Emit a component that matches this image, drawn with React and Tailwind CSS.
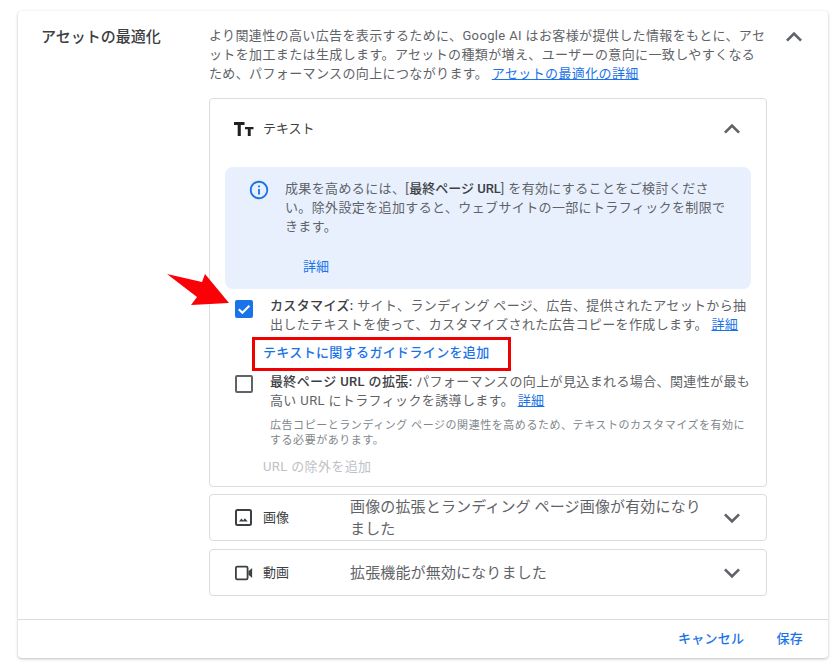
const FONT = "font-['Roboto','Noto_Sans_CJK_JP',sans-serif]";

function Chevron({ up, className }) {
  return (
    <svg viewBox="0 0 24 24" className={className} fill="currentColor">
      <path d={up ? 'M12 8l-6 6 1.41 1.41L12 10.83l4.59 4.58L18 14z' : 'M16.59 8.59L12 13.17 7.41 8.59 6 10l6 6 6-6z'} />
    </svg>
  );
}

function Checkbox({ checked }) {
  if (checked) {
    return (
      <svg viewBox="0 0 18 18" className="w-[18px] h-[18px]">
        <rect width="18" height="18" rx="2" fill="#1a73e8" />
        <path d="M3.8 9.2l3.6 3.6 7-7" fill="none" stroke="#fff" strokeWidth="2" />
      </svg>
    );
  }
  return <div className="w-[18px] h-[18px] rounded-[2px] border-2 border-[#5f6368]" />;
}

function CollapsedRow({ icon, label, children }) {
  return (
    <div className="flex items-center h-[47px] border border-[#dadce0] rounded-[4px] bg-white">
      <div className="w-[25px] shrink-0" />
      <div className="w-[18px] flex justify-center shrink-0">{icon}</div>
      <div className="w-[10px] shrink-0" />
      <div className="w-[87px] shrink-0 text-[13px] text-[#3c4043]">{label}</div>
      <div className="w-[356px] shrink-0 text-[15px] leading-[22px] tracking-[0.15px] text-[#5f6368] whitespace-nowrap">{children}</div>
      <div className="flex-1 flex justify-center pr-[8px]">
        <Chevron className="w-8 h-8 text-[#5f6368]" />
      </div>
    </div>
  );
}

export default function App() {
  return (
    <div className={`${FONT} w-[840px] h-[666px] bg-white overflow-hidden pt-[11px] pl-[18px]`}>
      <div className="w-[810px] h-[647px] bg-white rounded-[4px] shadow-[0_1px_3px_rgba(60,64,67,0.35)] flex flex-col">
        <div className="flex-1 flex pt-[15px]">
          <div className="w-[191px] pl-[23px] pt-[1px] text-[15px] leading-[20px] font-medium text-[#3c4043]">アセットの最適化</div>
          <div className="w-[558px]">
            <p className="text-[13px] leading-[19px] tracking-[0.37px] text-[#5f6368] whitespace-nowrap">
              より関連性の高い広告を表示するために、Google AI はお客様が提供した情報をもとに、アセ<br />
              ットを加工または生成します。アセットの種類が増え、ユーザーの意向に一致しやすくなる<br />
              ため、パフォーマンスの向上につながります。 <a className="text-[#1a73e8] underline">アセットの最適化の詳細</a>
            </p>
            <div className="mt-[15px] h-[389px] border border-[#dadce0] rounded-[4px] relative">
              <div className="h-[60px] flex items-center pl-[24px] pr-[18px]">
                <svg viewBox="0 0 20 14" className="w-[20px] h-[14px] text-[#202124]" fill="currentColor">
                  <path d="M0 0h10.5v3H6.8V14H3.7V3H0z" />
                  <path d="M11 5h8.5v2.3h-2.8V14h-2.9V7.3H11z" />
                </svg>
                <span className="ml-[9px] text-[13px] text-[#3c4043]">テキスト</span>
                <Chevron up className="w-8 h-8 ml-auto text-[#5f6368]" />
              </div>
              <div className="mx-[15px] h-[122px] mt-[8px] bg-[#e8f0fe] rounded-[8px] flex pt-[12px] pl-[23px]">
                <svg viewBox="0 0 24 24" className="w-[22px] h-[22px] text-[#1a73e8] shrink-0" fill="currentColor">
                  <path d="M11 7h2v2h-2zm0 4h2v6h-2zm1-9C6.48 2 2 6.48 2 12s4.48 10 10 10 10-4.48 10-10S17.52 2 12 2zm0 18c-4.41 0-8-3.59-8-8s3.59-8 8-8 8 3.59 8 8-3.59 8-8 8z" />
                </svg>
                <div className="ml-[15px]">
                  <p className="text-[13px] leading-[19px] tracking-[0.37px] text-[#5f6368] whitespace-nowrap">
                    成果を高めるには、[<b className="font-medium tracking-[0px] text-[#3c4043]">最終ページ URL</b>] を有効にすることをご検討くださ<br />
                    い。除外設定を追加すると、ウェブサイトの一部にトラフィックを制限で<br />
                    きます。
                  </p>
                  <a className="block mt-[22px] ml-[18px] text-[13px] leading-[18px] text-[#1a73e8]">詳細</a>
                </div>
              </div>
              <div className="flex mt-[7px] pl-[25px]">
                <div className="pt-[4px]"><Checkbox checked /></div>
                <p className="ml-[17px] text-[13px] leading-[19px] tracking-[0.37px] text-[#5f6368] whitespace-nowrap">
                  <b className="font-medium text-[#3c4043]">カスタマイズ:</b> サイト、ランディング ページ、広告、提供されたアセットから抽<br />
                  出したテキストを使って、カスタマイズされた広告コピーを作成します。 <a className="text-[#1a73e8] underline">詳細</a>
                </p>
              </div>
              <a className="block mt-[10px] ml-[53px] text-[13px] leading-[18px] tracking-[0.35px] font-medium text-[#1a73e8]">テキストに関するガイドラインを追加</a>
              <div className="flex mt-[10px] pl-[25px]">
                <div className="pt-[3px]"><Checkbox /></div>
                <p className="ml-[17px] text-[13px] leading-[19px] tracking-[0.37px] text-[#5f6368] whitespace-nowrap">
                  <b className="font-medium text-[#3c4043]">最終ページ URL の拡張:</b> パフォーマンスの向上が見込まれる場合、関連性が最も<br />
                  高い URL にトラフィックを誘導します。 <a className="text-[#1a73e8] underline">詳細</a>
                </p>
              </div>
              <p className="mt-[8px] ml-[60px] text-[11px] leading-[15px] tracking-[0.55px] text-[#80868b] whitespace-nowrap">
                広告コピーとランディング ページの関連性を高めるため、テキストのカスタマイズを有効に<br />
                する必要があります。
              </p>
              <div className="mt-[9px] ml-[53px] text-[13px] leading-[20px] tracking-[0.37px] text-[#bdc1c6]">URL の除外を追加</div>

              {/* annotations on top of the screenshot */}
              <div className="absolute left-[42px] top-[238px] w-[259px] h-[34px] border-[3px] border-[#f00000]" />
              <svg viewBox="0 0 66 36" className="absolute left-[-45px] top-[173px] w-[66px] h-[36px]">
                <path d="M2 2 L37 10 L40 2 L64 31 L26 33 L32 25 Z" fill="#fb0007" />
              </svg>
            </div>
            <div className="mt-[7px] flex flex-col gap-[8px]">
              <CollapsedRow
                label="画像"
                icon={
                  <svg viewBox="0 0 18 18" className="w-[18px] h-[18px] text-[#3c4043]" fill="none">
                    <rect x="1" y="1" width="15" height="15" rx="1.5" stroke="currentColor" strokeWidth="2" />
                    <path d="M4 12.5l2.4-3 1.8 2 1.6-2.2 3 3.2z" fill="currentColor" />
                  </svg>
                }
              >
                画像の拡張とランディング ページ画像が有効になり<br />ました
              </CollapsedRow>
              <CollapsedRow
                label="動画"
                icon={
                  <svg viewBox="0 0 20 16" className="w-[20px] h-[16px] text-[#3c4043]" fill="none">
                    <rect x="1" y="1" width="13" height="14" rx="1.5" stroke="currentColor" strokeWidth="2" />
                    <path d="M15 6l4-3.5v11L15 10z" fill="currentColor" />
                  </svg>
                }
              >
                拡張機能が無効になりました
              </CollapsedRow>
            </div>
          </div>
          <div className="flex-1 flex justify-center pr-[8px]">
            <Chevron up className="w-8 h-8 text-[#5f6368] mt-[-5px]" />
          </div>
        </div>
        <div className="h-[39px] border-t border-[#dadce0] flex items-center justify-end pr-[25px] gap-[32px] text-[13px] font-medium tracking-[0.3px] text-[#1a73e8]">
          <span>キャンセル</span>
          <span>保存</span>
        </div>
      </div>
    </div>
  );
}
